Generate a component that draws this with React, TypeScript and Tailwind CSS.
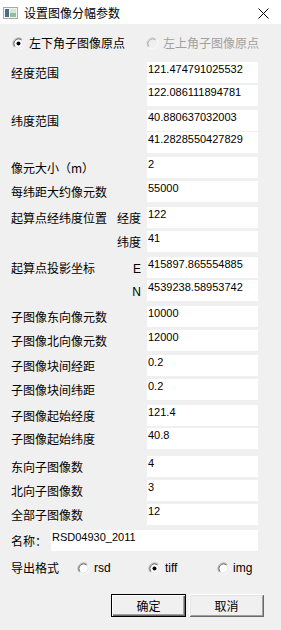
import React from "react";

const cjk = { fontFamily: '"Noto Sans CJK SC", "Noto Sans", sans-serif' };
const latin = { fontFamily: '"Liberation Sans", Arial, sans-serif' };

function Radio({ checked = false, disabled = false }: { checked?: boolean; disabled?: boolean }) {
  const o1 = disabled ? "#c8c8c8" : "#a0a0a0";
  const i1 = disabled ? "#b0b0b0" : "#696969";
  const o2 = "#ffffff";
  const i2 = disabled ? "#f0f0f0" : "#e3e3e3";
  return (
    <svg width="13" height="13" viewBox="0 0 13 13" className="shrink-0">
      <circle cx="6.5" cy="6.5" r="4.5" fill={disabled ? "#f0f0f0" : "#ffffff"} />
      <path d="M2.61 10.39 A5.5 5.5 0 0 1 10.39 2.61" stroke={o1} strokeWidth="1" fill="none" />
      <path d="M10.39 2.61 A5.5 5.5 0 0 1 2.61 10.39" stroke={o2} strokeWidth="1" fill="none" />
      <path d="M3.32 9.68 A4.5 4.5 0 0 1 9.68 3.32" stroke={i1} strokeWidth="1" fill="none" />
      <path d="M9.68 3.32 A4.5 4.5 0 0 1 3.32 9.68" stroke={i2} strokeWidth="1" fill="none" />
      {checked && <circle cx="6.5" cy="6.5" r="2" fill="#000000" />}
    </svg>
  );
}

function Box({ value, className = "w-[111px]" }: { value: string; className?: string }) {
  return (
    <div className={`h-full bg-white pl-[1px] pt-[1px] text-[11px] leading-[12px] text-black ${className}`} style={latin}>
      {value}
    </div>
  );
}

function Row({
  label,
  sub,
  subLatin,
  value,
  className,
}: {
  label?: string;
  sub?: string;
  subLatin?: boolean;
  value: string;
  className: string;
}) {
  return (
    <div className={`flex h-[21px] pl-[11px] ${className}`}>
      <div className="flex w-[136px] items-center justify-between pr-[6px]">
        <span className="text-[12px] leading-[14px] text-black whitespace-nowrap">{label ?? ""}</span>
        {sub && (
          <span
            className={subLatin ? "text-[12px] leading-[14px] text-black pt-[2px]" : "text-[12px] leading-[14px] text-black"}
            style={subLatin ? latin : undefined}
          >
            {sub}
          </span>
        )}
      </div>
      <Box value={value} />
    </div>
  );
}

export default function App() {
  return (
    <div className="w-[281px] h-[630px] bg-[#f0f0f0] flex flex-col overflow-hidden" style={cjk}>
      {/* Title bar */}
      <div className="h-[24px] bg-white flex items-center pt-[2px] relative">
        <svg width="15" height="12" viewBox="0 0 15 12" className="ml-[3px]">
          <rect x="0.5" y="0.5" width="14" height="11" fill="#f4f4f4" stroke="#a8a8a8" />
          <rect x="2" y="2" width="4" height="8" fill="#4d6a86" />
          <rect x="7" y="2" width="6" height="8" fill="#d6e4dc" />
          <rect x="7" y="6" width="6" height="4" fill="#8fbf9a" />
        </svg>
        <span className="ml-[6px] text-[12px] leading-[14px] text-black">设置图像分幅参数</span>
        <svg width="11" height="11" viewBox="0 0 11 11" className="absolute left-[258px] top-[8px]">
          <path d="M0.5 0.5 L10.5 10.5 M10.5 0.5 L0.5 10.5" stroke="#000" strokeWidth="1" />
        </svg>
      </div>

      {/* Origin radios */}
      <div className="mt-[12px] h-[14px] flex items-center pl-[12px]">
        <Radio checked />
        <span className="ml-[4px] text-[12px] leading-[14px] text-black">左下角子图像原点</span>
        <span className="ml-[21px] flex items-center">
          <Radio disabled />
        </span>
        <span className="ml-[4px] text-[12px] leading-[14px] text-[#a0a0a0]">左上角子图像原点</span>
      </div>

      <Row className="mt-[12px]" label="经度范围" value="121.474791025532" />
      <Row className="mt-[2px]" value="122.086111894781" />
      <Row className="mt-[4px]" label="纬度范围" value="40.880637032003" />
      <Row className="mt-[1px]" value="41.2828550427829" />
      <Row className="mt-[4px]" label="像元大小（m）" value="2" />
      <Row className="mt-[3px]" label="每纬距大约像元数" value="55000" />
      <Row className="mt-[5px]" label="起算点经纬度位置" sub="经度" value="122" />
      <Row className="mt-[3px]" sub="纬度" value="41" />
      <Row className="mt-[5px]" label="起算点投影坐标" sub="E" subLatin value="415897.865554885" />
      <Row className="mt-[2px]" sub="N" subLatin value="4539238.58953742" />
      <Row className="mt-[5px]" label="子图像东向像元数" value="10000" />
      <Row className="mt-[3px]" label="子图像北向像元数" value="12000" />
      <Row className="mt-[4px]" label="子图像块间经距" value="0.2" />
      <Row className="mt-[3px]" label="子图像块间纬距" value="0.2" />
      <Row className="mt-[5px]" label="子图像起始经度" value="121.4" />
      <Row className="mt-[2px]" label="子图像起始纬度" value="40.8" />
      <Row className="mt-[7px]" label="东向子图像数" value="4" />
      <Row className="mt-[3px]" label="北向子图像数" value="3" />
      <Row className="mt-[3px]" label="全部子图像数" value="12" />

      {/* Name */}
      <div className="mt-[5px] flex h-[21px] pl-[11px]">
        <div className="w-[40px] flex items-center">
          <span className="text-[12px] leading-[14px] text-black">名称：</span>
        </div>
        <Box value="RSD04930_2011" className="w-[207px]" />
      </div>

      {/* Export format */}
      <div className="mt-[10px] h-[14px] flex items-center pl-[11px]">
        <span className="w-[66px] text-[12px] leading-[14px] text-black">导出格式</span>
        <div className="w-[71px] flex items-center">
          <Radio />
          <span className="ml-[4px] text-[12px] leading-[14px] text-black" style={latin}>rsd</span>
        </div>
        <div className="w-[69px] flex items-center">
          <Radio checked />
          <span className="ml-[4px] text-[12px] leading-[14px] text-black" style={latin}>tiff</span>
        </div>
        <div className="flex items-center">
          <Radio />
          <span className="ml-[3px] text-[12px] leading-[14px] text-black" style={latin}>img</span>
        </div>
      </div>

      {/* Buttons */}
      <div className="mt-[19px] flex justify-end gap-[3px] pr-[17px]">
        <button className="w-[75px] h-[23px] bg-[#f0f0f0] border border-black shadow-[inset_1px_1px_0_#ffffff,inset_-1px_-1px_0_#696969,inset_-2px_-2px_0_#a0a0a0] text-[12px] leading-[14px] text-black flex items-center justify-center">
          确定
        </button>
        <button className="w-[75px] h-[23px] bg-[#f0f0f0] shadow-[inset_1px_1px_0_#ffffff,inset_-1px_-1px_0_#696969,inset_2px_2px_0_#e3e3e3,inset_-2px_-2px_0_#a0a0a0] text-[12px] leading-[14px] text-black flex items-center justify-center">
          取消
        </button>
      </div>
    </div>
  );
}
